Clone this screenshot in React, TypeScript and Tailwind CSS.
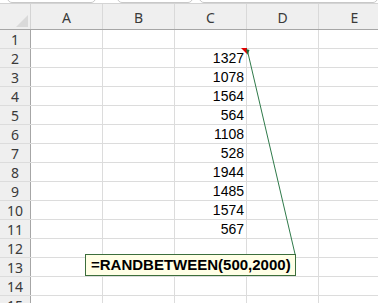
import React from "react";

const cols = ["A", "B", "C", "D", "E"];
const values: (number | null)[] = [null, 1327, 1078, 1564, 564, 1108, 528, 1944, 1485, 1574, 567, null, null, null, null];

export default function App() {
  return (
    <div className="relative w-[378px] h-[303px] overflow-hidden bg-white">
      {/* top tabs strip */}
      <div className="h-[3px] flex bg-white overflow-hidden">
        <div className="ml-[7px] w-[100px] h-[10px] -mt-[7px] border border-[#c8c8c8] rounded-b-[5px] bg-white" />
        <div className="ml-[21px] w-[85px] h-[10px] -mt-[7px] border border-[#c8c8c8] rounded-b-[5px] bg-white" />
        <div className="ml-[6px] w-[200px] h-[10px] -mt-[7px] border border-[#c8c8c8] rounded-b-[5px] bg-white" />
      </div>
      {/* header row */}
      <div className="flex h-[27px] bg-[#efefef] border-t border-[#d4d4d4] border-b border-b-[#a6a6a6]">
        <div className="relative w-[31px] shrink-0 border-r border-[#d4d4d4]">
          <svg className="absolute left-0 top-0" width="31" height="26">
            <polygon points="28,11 28,23 16,23" fill="#d9d9d9" />
          </svg>
        </div>
        {cols.map((c) => (
          <div
            key={c}
            className="w-[72px] shrink-0 flex items-center justify-center border-r border-[#d9d9d9] text-[14px] text-[#3a3a3a] pt-[1px]"
            style={{ fontFamily: "'Noto Sans', 'Liberation Sans', sans-serif" }}
          >
            {c}
          </div>
        ))}
      </div>
      {/* rows */}
      {values.map((v, i) => (
        <div key={i} className="flex h-[19px] border-b border-[#dcdcdc]">
          <div
            className="w-[31px] shrink-0 bg-[#efefef] border-r border-[#a6a6a6] flex items-center justify-center text-[14px] text-[#3a3a3a]"
            style={{ fontFamily: "'Noto Sans', 'Liberation Sans', sans-serif" }}
          >
            {i + 1}
          </div>
          <div className="w-[72px] shrink-0 border-r border-[#dcdcdc]" />
          <div className="w-[72px] shrink-0 border-r border-[#dcdcdc]" />
          <div
            className="w-[72px] shrink-0 border-r border-[#dcdcdc] flex items-center justify-end pr-[2px] text-[14px] text-black"
            style={{ fontFamily: "'Liberation Sans', Arial, sans-serif" }}
          >
            {v ?? ""}
          </div>
          <div className="w-[72px] shrink-0 border-r border-[#dcdcdc]" />
          <div className="w-[72px] shrink-0 border-r border-[#dcdcdc]" />
        </div>
      ))}

      {/* comment connector line and indicator */}
      <svg className="absolute left-0 top-0 pointer-events-none" width="378" height="303">
        <polygon points="241,48 247,48 247,54" fill="#e00000" />
        <line x1="247.5" y1="51" x2="295" y2="254" stroke="#2f7a4a" strokeWidth="1" />
        <polygon points="246,49 249.5,50 247.5,55" fill="#1f6b3a" />
      </svg>

      {/* formula callout */}
      <div
        className="absolute left-[85px] top-[254px] w-[211px] h-[22px] bg-[#ffffe6] border border-[#3c6e3c] flex items-center pl-[5px] text-[15px] font-bold text-black whitespace-nowrap"
        style={{ fontFamily: "'Liberation Sans', Arial, sans-serif" }}
      >
        =RANDBETWEEN(500,2000)
      </div>
    </div>
  );
}
